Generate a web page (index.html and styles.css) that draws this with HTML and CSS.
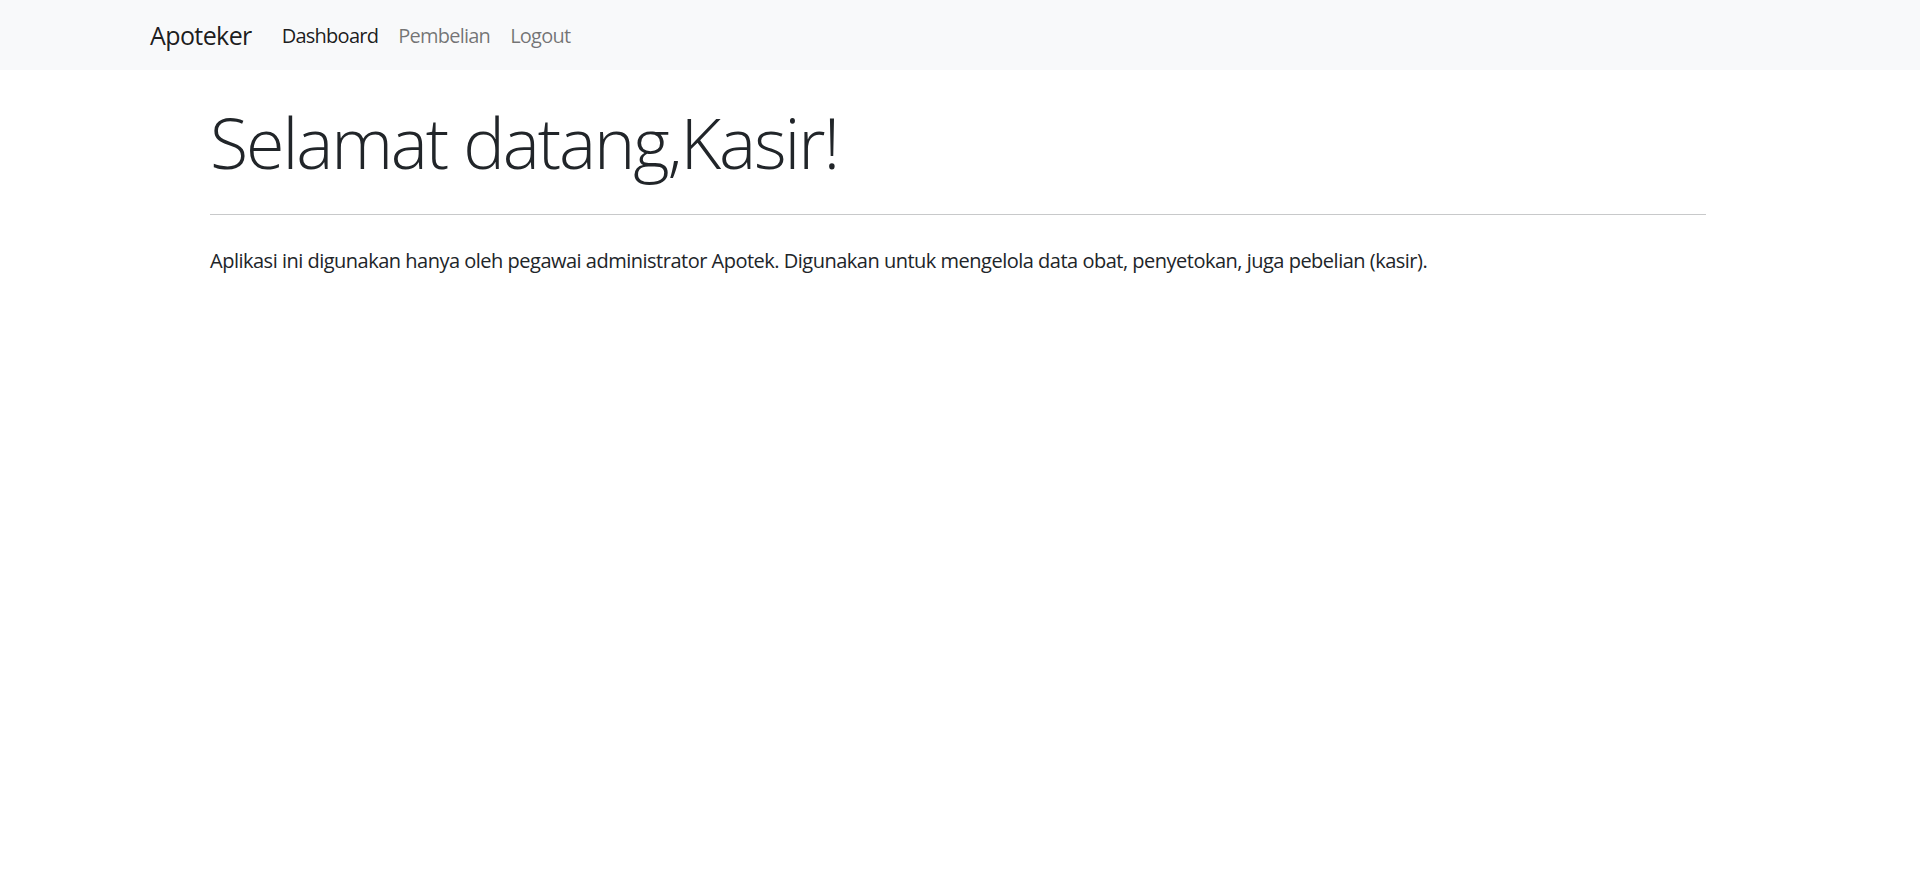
FILE: index.html
```html
<!DOCTYPE html>
<html lang="id">
<head>
<meta charset="utf-8">
<title>Apoteker</title>
<link rel="stylesheet" href="styles.css">
</head>
<body>
<nav class="navbar">
  <div class="nav-container">
    <a class="brand" href="#">Apoteker</a>
    <ul class="nav">
      <li><a class="nav-link active" href="#">Dashboard</a></li>
      <li><a class="nav-link" href="#">Pembelian</a></li>
      <li><a class="nav-link" href="#">Logout</a></li>
    </ul>
  </div>
</nav>
<main class="main">
  <h1 class="display">Selamat datang,Kasir!</h1>
  <hr class="divider">
  <p class="intro">Aplikasi ini digunakan hanya oleh pegawai administrator Apotek. Digunakan untuk mengelola data obat, penyetokan, juga pebelian (kasir).</p>
</main>
</body>
</html>
```

FILE: styles.css
```css
* { box-sizing: border-box; }
html, body { margin: 0; padding: 0; }
body {
  font-family: "Open Sans", "Noto Sans", "Liberation Sans", sans-serif;
  font-size: 20px;
  line-height: 1.5;
  color: #212529;
  background: #fff;
  letter-spacing: -0.5px;
}
.navbar {
  background: #f8f9fa;
  height: 70px;
  display: flex;
  align-items: center;
  padding-top: 2px;
}
.nav-container {
  width: 100%;
  padding: 0 150px;
  display: flex;
  align-items: center;
}
.brand {
  font-size: 25px;
  line-height: 1.5;
  color: rgba(0,0,0,.9);
  text-decoration: none;
  margin-right: 20px;
  padding: 6px 0;
  letter-spacing: -0.6px;
}
.nav {
  list-style: none;
  margin: 0;
  padding: 0;
  display: flex;
}
.nav-link {
  display: block;
  padding: 10px;
  color: rgba(0,0,0,.55);
  text-decoration: none;
  font-size: 20px;
  line-height: 1.5;
  letter-spacing: -0.75px;
}
.nav-link.active { color: rgba(0,0,0,.9); }
.main {
  margin: 30px 0 0 210px;
  width: 1496px;
}
.display {
  font-size: 70px;
  font-weight: 300;
  line-height: 1.2;
  margin: 0 0 10px;
  letter-spacing: -2.1px;
}
.divider {
  margin: 30px 0 31px;
  border: 0;
  border-top: 1px solid #c8c9ca;
}
.intro {
  margin: 0 0 20px;
}
```
